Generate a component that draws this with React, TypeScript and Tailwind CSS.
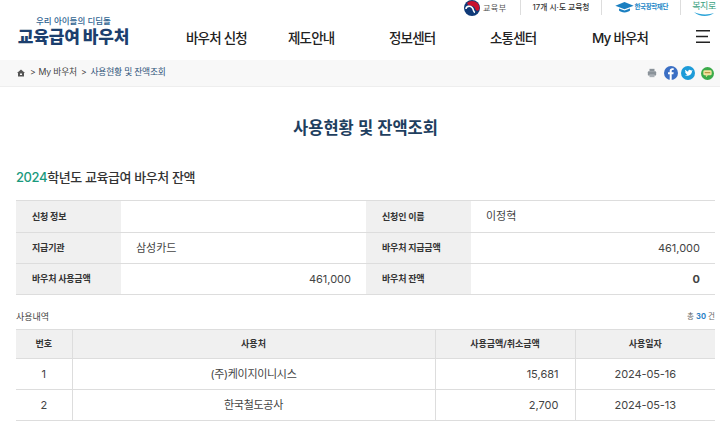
import React from 'react';

const NAV_ITEMS = ['바우처 신청', '제도안내', '정보센터', '소통센터', 'My 바우처'];

const USAGE_ROWS = [
  { no: 1, place: '(주)케이지이니시스', amount: '15,681', date: '2024-05-16' },
  { no: 2, place: '한국철도공사', amount: '2,700', date: '2024-05-13' },
];

const Divider = () => <span className="h-[15px] w-px bg-[#dddddd]" />;

// 태극 mark
const GovMark = () => (
  <svg viewBox="0 0 16 16" className="h-4 w-4">
    <circle cx="8" cy="8" r="8" fill="#0f3a78" />
    <path d="M3 3A7.500 7.500 0 0 1 15.500 8C15.500 10 14 11 12.500 10.500 11 10 11.500 7.500 9.500 6.500 7.500 5.500 4 6 3 3Z" fill="#c8102e" />
    <path d="M2 9C2 6 6 5.500 8 7.500 10 9.500 9 12 11 12.500" fill="none" stroke="#fff" strokeWidth="1.600" />
  </svg>
);

const CapMark = () => (
  <svg viewBox="0 0 20 12" className="h-[11px] w-[19px]">
    <path d="M10 0 20 4 10 8 0 4Z" fill="#1a7fc1" />
    <path d="M4 7v2.400C6 12 14 12 16 9.400V7L10 9.400Z" fill="#1a7fc1" />
  </svg>
);

const TopBar = () => (
  <div className="flex h-5 items-start justify-end pr-1">
    <div className="flex h-4 items-center">
      <GovMark />
      <span className="ml-[3px] text-[8px] tracking-[0.5px] text-[#555555]">교육부</span>
    </div>
    <div className="ml-[13px] flex h-[15px] items-center"><Divider /></div>
    <span className="ml-[12px] flex h-[15px] items-center whitespace-nowrap text-[7.750px] font-medium text-[#333333]">17개 시·도 교육청</span>
    <div className="ml-[11px] flex h-[15px] items-center"><Divider /></div>
    <div className="ml-[13px] flex h-[15px] items-center gap-px">
      <CapMark />
      <span className="whitespace-nowrap text-[6.500px] font-bold tracking-[-0.4px] text-[#1e88c7]">한국장학재단</span>
    </div>
    <div className="ml-[12px] flex h-[15px] items-center"><Divider /></div>
    <div className="ml-[11px] flex h-[17px] w-6 flex-col items-center">
      <span className="whitespace-nowrap text-[9px] leading-[12px] tracking-[-0.5px] text-[#3aa17e]">복지로</span>
      <svg viewBox="0 0 24 5" className="h-[5px] w-6">
        <path d="M2 0C7 5 17 5 22 1C17 3 7 3 2 0Z" fill="#2aa3d8" />
      </svg>
    </div>
  </div>
);

const MainNav = () => (
  <div className="flex h-10 items-start pl-[17px]">
    <div className="-mt-[6px] flex w-[113px] flex-col items-center">
      <span className="text-[8.500px] font-medium leading-[14px] text-[#2f6491]">우리 아이들의 디딤돌</span>
      <span className="whitespace-nowrap text-[17px] font-black leading-[19px] tracking-[-0.2px] text-[#1c3f6e]">교육급여 바우처</span>
    </div>
    <nav className="ml-[56px] flex pt-[7px] text-[13.500px] font-medium leading-[22px] tracking-[-0.8px] text-[#222222]">
      {NAV_ITEMS.map((item, i) => (
        <a key={item} className={`whitespace-nowrap ${['w-[102px]', 'w-[101px]', 'w-[101px]', 'w-[102px]', 'w-[104px]'][i]}`}>
          {item}
        </a>
      ))}
    </nav>
    <svg viewBox="0 0 14 13" className="mt-[10px] h-[13px] w-[14px]">
      <path d="M0 .750h14M0 6.500h12M0 12.250h14" stroke="#222222" strokeWidth="1.500" />
    </svg>
  </div>
);

const Breadcrumb = () => (
  <div className="flex h-[27px] items-center justify-between border-b border-[#eeeeee] bg-[#f8f8f8] pl-[17px] pr-[6px] text-[8.750px] tracking-[-0.2px] text-[#444444]">
    <div className="flex items-center">
      <svg viewBox="0 0 8 8" className="h-2 w-2 text-[#555555]">
        <path d="M4 .5 8 4H7v3.500H1V4H0Z" fill="currentColor" />
        <rect x="3" y="4.500" width="2" height="1.500" fill="#f8f8f8" />
      </svg>
      <span className="ml-[5px]">&gt;</span>
      <span className="ml-[3px]">My 바우처</span>
      <span className="ml-[4px]">&gt;</span>
      <span className="ml-[4px] text-[#2d5378]">사용현황 및 잔액조회</span>
    </div>
    <div className="flex items-center gap-[3px]">
      <svg viewBox="0 0 12 12" className="mr-[4px] h-[10px] w-[10px]">
        <rect x="3" y="1" width="6" height="3" fill="#8a9299" />
        <rect x="1" y="4" width="10" height="5" rx="1" fill="#8a9299" />
        <rect x="3" y="7.500" width="6" height="3.500" fill="#a9afb5" />
      </svg>
      <svg viewBox="0 0 14 14" className="h-[14px] w-[14px]">
        <circle cx="7" cy="7" r="7" fill="#3b6fc4" />
        <path d="M7.700 14V8.200h1.700l.3-2H7.700V5c0-.6.3-1 1-1h1V2.300C9.300 2.200 8.900 2.200 8.300 2.200 6.800 2.200 5.700 3.100 5.700 4.800v1.400H4v2h1.700V14Z" fill="#fff" />
      </svg>
      <svg viewBox="0 0 14 14" className="h-[14px] w-[14px]">
        <circle cx="7" cy="7" r="7" fill="#1d9bd8" />
        <path d="M11 4.600c-.3.1-.6.2-.9.2.3-.2.6-.5.7-.9-.3.2-.6.3-1 .4a1.600 1.600 0 0 0-2.700 1.400C6.700 5.600 5.200 4.900 4.300 3.800c-.4.700-.2 1.600.5 2.100-.3 0-.5-.1-.7-.2 0 .8.500 1.400 1.300 1.600-.2.100-.5.100-.7 0 .2.600.8 1.100 1.500 1.100-.7.500-1.500.8-2.400.7.700.500 1.600.7 2.500.7 3 0 4.800-2.500 4.700-4.800.3-.1.700-.4.900-.700Z" fill="#fff" />
      </svg>
      <svg viewBox="0 0 14 14" className="ml-[3px] h-[13px] w-[13px]">
        <circle cx="7" cy="7" r="7" fill="#3bab4a" />
        <rect x="2.500" y="3.500" width="9" height="5.500" rx="1.500" fill="#f3e3a0" />
        <path d="M5 9h2.500L5.500 11Z" fill="#f3e3a0" />
        <rect x="4" y="5.500" width="6" height="1.200" fill="#b5913e" />
      </svg>
    </div>
  </div>
);

const InfoLabel = ({ children }: { children: React.ReactNode }) => (
  <div className="flex w-[105px] shrink-0 items-center bg-[#f0f0f0] pl-4 text-[9px] font-bold tracking-[-0.2px] text-[#333333]">{children}</div>
);

const InfoValue = ({ children, className = '' }: { children?: React.ReactNode; className?: string }) => (
  <div className={`flex items-center px-[15px] text-[11px] text-[#444444] ${className}`}>{children}</div>
);

const InfoRow = ({ children, first }: { children: React.ReactNode; first?: boolean }) => (
  <div className={`flex border-b border-[#dddddd] ${first ? 'h-[32px]' : 'h-[31px]'}`}>{children}</div>
);

const InfoTable = () => (
  <div className="border-t border-[#dddddd]">
    <InfoRow first>
      <InfoLabel>신청 정보</InfoLabel>
      <InfoValue className="w-[245px]" />
      <InfoLabel>신청인 이름</InfoLabel>
      <InfoValue className="flex-1">이정혁</InfoValue>
    </InfoRow>
    <InfoRow>
      <InfoLabel>지급기관</InfoLabel>
      <InfoValue className="w-[245px]">삼성카드</InfoValue>
      <InfoLabel>바우처 지급금액</InfoLabel>
      <InfoValue className="flex-1 justify-end">461,000</InfoValue>
    </InfoRow>
    <InfoRow>
      <InfoLabel>바우처 사용금액</InfoLabel>
      <InfoValue className="w-[245px] justify-end">461,000</InfoValue>
      <InfoLabel>바우처 잔액</InfoLabel>
      <InfoValue className="flex-1 justify-end font-bold text-[#222222]">0</InfoValue>
    </InfoRow>
  </div>
);

const UsageTable = () => (
  <table className="w-full table-fixed border-collapse text-[11px] text-[#444444]">
    <colgroup>
      <col className="w-[56px]" />
      <col />
      <col className="w-[140px]" />
      <col className="w-[140px]" />
    </colgroup>
    <thead>
      <tr className="h-[29px] border-y border-[#dddddd] bg-[#f0f0f0] text-[9px] font-bold text-[#333333]">
        <th className="font-bold">번호</th>
        <th className="border-l border-[#dddddd] font-bold">사용처</th>
        <th className="border-l border-[#dddddd] font-bold">사용금액/취소금액</th>
        <th className="border-l border-[#dddddd] font-bold">사용일자</th>
      </tr>
    </thead>
    <tbody>
      {USAGE_ROWS.map((row) => (
        <tr key={row.no} className="h-[31px] border-b border-[#dddddd]">
          <td className="text-center">{row.no}</td>
          <td className="border-l border-[#dddddd] text-center tracking-[-0.3px]">{row.place}</td>
          <td className="border-l border-[#dddddd] pr-4 text-right">{row.amount}</td>
          <td className="border-l border-[#dddddd] text-center tracking-[-0.1px]">{row.date}</td>
        </tr>
      ))}
    </tbody>
  </table>
);

export default function App() {
  return (
    <div className="h-[421px] w-[720px] overflow-hidden bg-white font-['Inter','Noto_Sans_CJK_KR',sans-serif]">
      <TopBar />
      <MainNav />
      <Breadcrumb />
      <main className="pl-4 pr-[5px]">
        <h1 className="pt-[29px] text-center text-[16.500px] font-semibold leading-[24px] text-[#1f3f5f]">사용현황 및 잔액조회</h1>
        <h2 className="mt-[27px] text-[13px] font-medium leading-[20px] tracking-[-0.4px] text-[#333333]">
          <span className="text-[#1a9a7d]">2024</span>학년도 교육급여 바우처 잔액
        </h2>
        <div className="mt-[13px]">
          <InfoTable />
        </div>
        <div className="mt-[15px] flex h-[14px] items-center justify-between text-[9px] text-[#444444]">
          <span>사용내역</span>
          <span className="text-[7.500px] text-[#666666]">
            총 <b className="text-[#2b7fc4]">30</b> 건
          </span>
        </div>
        <div className="mt-[5px]">
          <UsageTable />
        </div>
      </main>
    </div>
  );
}
